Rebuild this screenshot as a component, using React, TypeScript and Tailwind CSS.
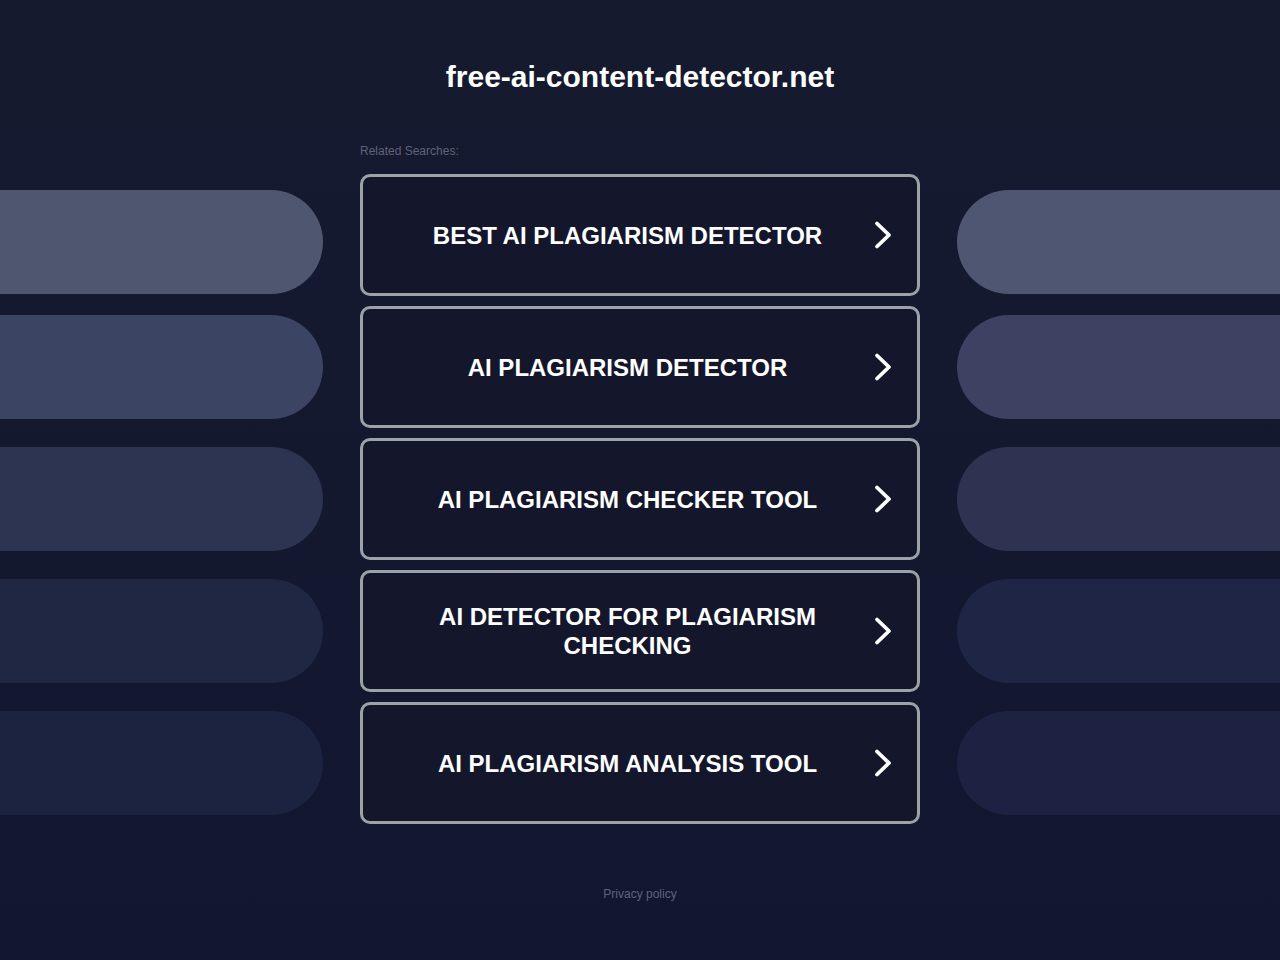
const searches = [
  { label: "BEST AI PLAGIARISM DETECTOR", left: "bg-[#4f5770]", right: "bg-[#4f5672]", place: "self-end mb-[2px]" },
  { label: "AI PLAGIARISM DETECTOR", left: "bg-[#3b4462]", right: "bg-[#3e4262]", place: "self-center" },
  { label: "AI PLAGIARISM CHECKER TOOL", left: "bg-[#2c3452]", right: "bg-[#2e3352]", place: "self-center" },
  { label: "AI DETECTOR FOR PLAGIARISM CHECKING", left: "bg-[#1f2743]", right: "bg-[#1f2544]", place: "self-center" },
  { label: "AI PLAGIARISM ANALYSIS TOOL", left: "bg-[#1c2341]", right: "bg-[#1e2242]", place: "self-center" },
];

function Chevron() {
  return (
    <svg width="22" height="32" viewBox="0 0 22 32" fill="none">
      <path
        d="M5 4.5 L17 16 L5 27.5"
        stroke="white"
        strokeWidth="3.8"
        strokeLinecap="round"
        strokeLinejoin="round"
      />
    </svg>
  );
}

export default function App() {
  return (
    <div
      className="min-h-[960px] w-full bg-gradient-to-b from-[#151a2f] to-[#121730] text-white"
      style={{ fontFamily: '"Liberation Sans", Arial, sans-serif' }}
    >
      <header className="pt-[60px] text-center">
        <h1 className="text-[30px] font-bold leading-[34px] text-white">free-ai-content-detector.net</h1>
      </header>

      <div className="mt-[50px] grid grid-cols-[323px_560px_323px] gap-x-[37px]">
        <div />
        <p className="text-[12px] leading-[14px] text-[#5d6478]">Related Searches:</p>
        <div />
      </div>

      <div className="mt-[16px] grid grid-cols-[323px_560px_323px] gap-x-[37px] gap-y-[10px]">
        {searches.map((s) => (
          <div key={s.label} className="contents">
            <div className={`h-[104px] rounded-r-full ${s.place} ${s.left}`} />
            <a
              href="#"
              className="flex h-[122px] items-center rounded-[10px] border-[3px] border-[#9da1a8] bg-[#14172c] pl-[32px]"
            >
              <span className="flex-1 text-center text-[24px] font-bold leading-[29px] text-white">
                {s.label}
              </span>
              <span className="flex w-[45px] justify-center">
                <Chevron />
              </span>
              <span className="w-[12px]" />
            </a>
            <div className={`h-[104px] rounded-l-full ${s.place} ${s.right}`} />
          </div>
        ))}
      </div>

      <footer className="pt-[57px] pb-[40px] text-center">
        <a href="#" className="text-[12px] leading-[14px] text-[#5d6478]">
          Privacy policy
        </a>
      </footer>
    </div>
  );
}
